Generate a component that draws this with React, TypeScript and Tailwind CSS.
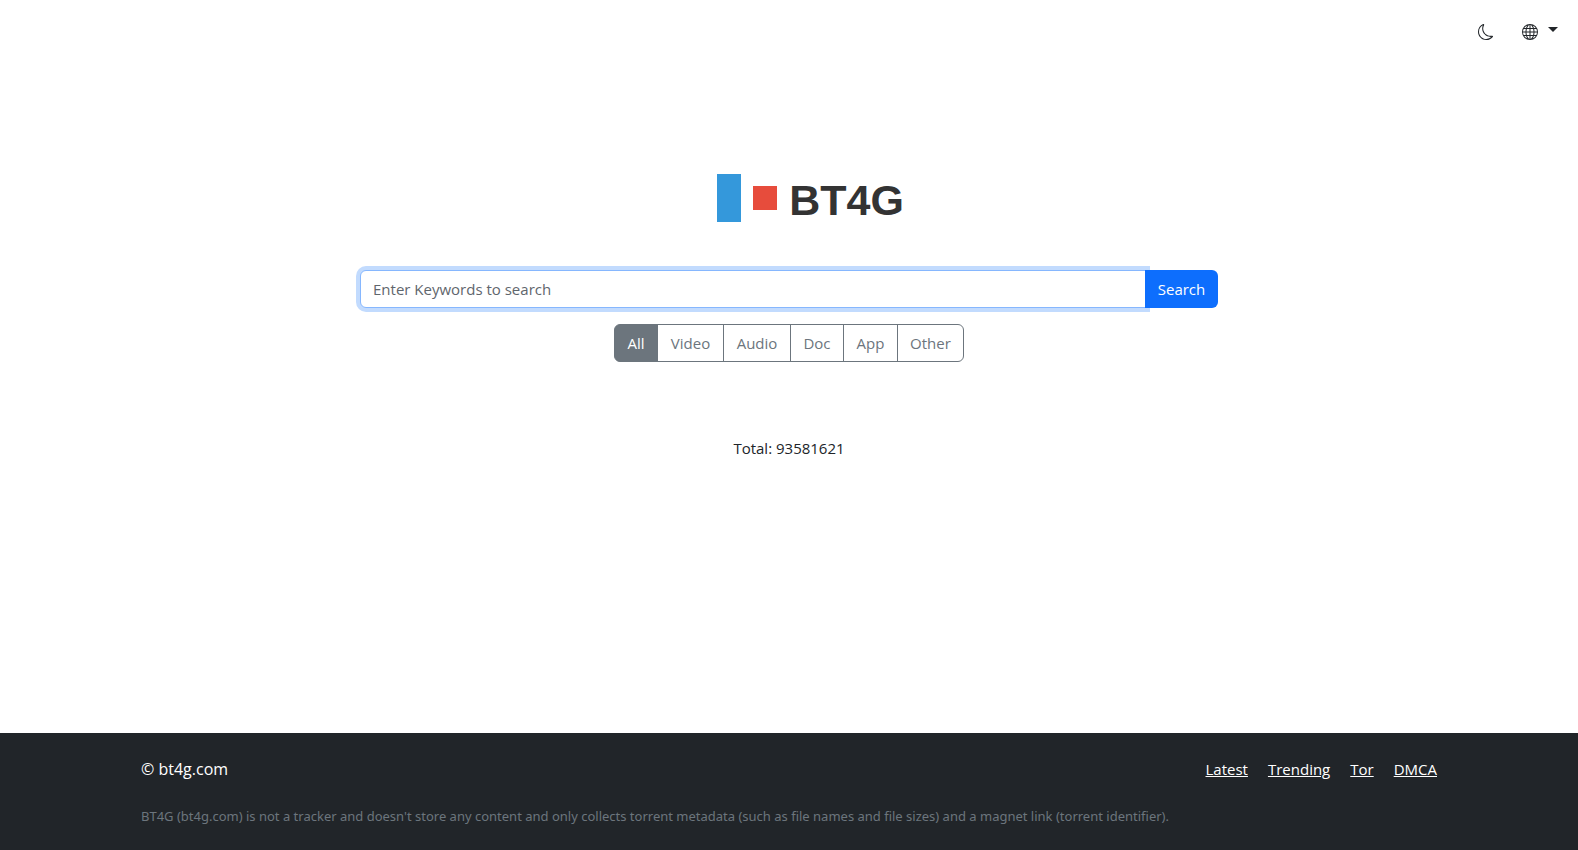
import { useState } from "react";
import { BsGlobe, BsMoon } from "react-icons/bs";

const categories = [
  { name: "All", width: "w-11" },
  { name: "Video", width: "w-[67px]" },
  { name: "Audio", width: "w-[68px]" },
  { name: "Doc", width: "w-[54px]" },
  { name: "App", width: "w-[55px]" },
  { name: "Other", width: "w-[67px]" },
];

const links = ["Latest", "Trending", "Tor", "DMCA"];

function Logo() {
  return (
    <h1 className="flex items-center gap-3 text-[43px] leading-12 font-bold text-[#333333] [font-family:'Liberation_Sans',Arial,sans-serif]">
      <span className="h-12 w-6 bg-[#3498db]" />
      <span className="size-6 bg-[#e74c3c]" />
      <span className="pt-1">BT4G</span>
    </h1>
  );
}

export default function App() {
  const [category, setCategory] = useState("All");

  return (
    <div className="flex min-h-screen flex-col bg-white text-[15px] leading-6 text-[#212529] [font-family:'Open_Sans','Noto_Sans',sans-serif]">
      <header className="flex items-center justify-end gap-7 px-5 pt-5">
        <button type="button" aria-label="Toggle dark mode" className="flex h-6 items-center">
          <BsMoon size={16} />
        </button>
        <button type="button" aria-label="Language" className="flex h-6 items-center gap-[10px]">
          <BsGlobe size={16} />
          <span className="mb-1.5 border-x-5 border-t-5 border-x-transparent border-t-[#212529]" />
        </button>
      </header>

      <main className="mx-auto flex w-full max-w-[882px] grow flex-col items-center px-3 pt-32">
        <div className="pl-[43px]">
          <Logo />
        </div>

        <form className="mt-[46px] flex w-full" onSubmit={(e) => e.preventDefault()}>
          <input
            type="text"
            aria-label="Keywords"
            placeholder="Enter Keywords to search"
            className="h-[38px] min-w-0 grow rounded-l-md border border-[#86b7fe] bg-white px-3 ring-4 ring-[#c2dbfe] outline-none placeholder:text-[#5f666d]"
          />
          <button
            type="submit"
            className="relative -ml-px h-[38px] w-[73px] rounded-r-md bg-[#0d6efd] text-white"
          >
            Search
          </button>
        </form>

        <div role="group" aria-label="Category" className="mt-4 flex">
          {categories.map(({ name, width }) => (
            <button
              key={name}
              type="button"
              aria-pressed={category === name}
              onClick={() => setCategory(name)}
              className={`${width} -ml-px h-[38px] border border-[#6c757d] first:ml-0 first:rounded-l-md last:rounded-r-md ${
                category === name ? "bg-[#6c757d] text-white" : "text-[#6c757d]"
              }`}
            >
              {name}
            </button>
          ))}
        </div>

        <p className="mt-[74px]">Total: 93581621</p>
      </main>

      <footer className="bg-[#212529] pt-6 pb-[22px] text-white">
        <div className="mx-auto max-w-[1320px] px-3">
          <div className="flex justify-between">
            <span className="text-base">© bt4g.com</span>
            <nav className="flex gap-5">
              {links.map((link) => (
                <a key={link} href={`#${link.toLowerCase()}`} className="underline">
                  {link}
                </a>
              ))}
            </nav>
          </div>
          <p className="mt-[23px] text-[13px] leading-6 text-[#6c757d] [font-family:'Noto_Sans',sans-serif]">
            BT4G (bt4g.com) is not a tracker and doesn't store any content and only collects torrent
            metadata (such as file names and file sizes) and a magnet link (torrent identifier).
          </p>
        </div>
      </footer>
    </div>
  );
}
